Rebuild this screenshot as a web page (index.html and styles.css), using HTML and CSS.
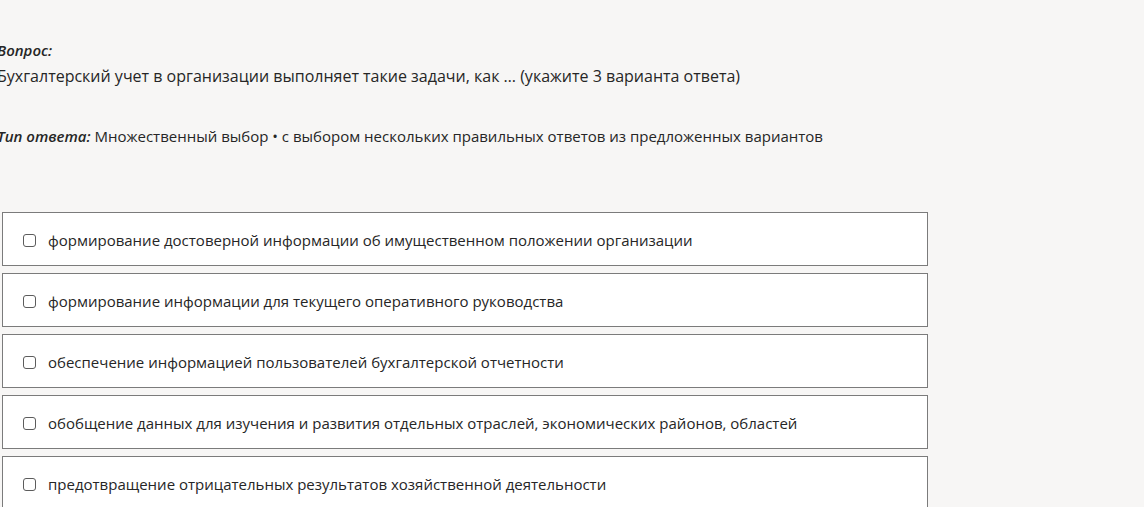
FILE: index.html
```html
<!DOCTYPE html>
<html lang="ru">
<head>
<meta charset="utf-8">
<link rel="stylesheet" href="styles.css">
</head>
<body>
<main class="page">
  <section class="question">
    <div class="label">Вопрос:</div>
    <div class="text">Бухгалтерский учет в организации выполняет такие задачи, как … (укажите 3 варианта ответа)</div>
  </section>
  <div class="type"><span class="label">Тип ответа:</span> Множественный выбор • с выбором нескольких правильных ответов из предложенных вариантов</div>
  <ul class="options">
    <li class="option"><span class="box"></span><span>формирование достоверной информации об имущественном положении организации</span></li>
    <li class="option"><span class="box"></span><span>формирование информации для текущего оперативного руководства</span></li>
    <li class="option"><span class="box"></span><span>обеспечение информацией пользователей бухгалтерской отчетности</span></li>
    <li class="option"><span class="box"></span><span>обобщение данных для изучения и развития отдельных отраслей, экономических районов, областей</span></li>
    <li class="option"><span class="box"></span><span>предотвращение отрицательных результатов хозяйственной деятельности</span></li>
  </ul>
</main>
</body>
</html>
```
FILE: styles.css
```css
html, body {
  margin: 0;
  padding: 0;
  background: #f7f6f5;
  font-family: "Open Sans", "Noto Sans", sans-serif;
  color: #262626;
  overflow: hidden;
}
.page {
  padding: 40px 0 0 2px;
  width: 926px;
}
.question {
  margin-left: -5px;
}
.label {
  font-weight: 600;
  font-style: italic;
  font-size: 15px;
}
.question .label {
  line-height: 20px;
}
.text {
  font-size: 16px;
  line-height: 24px;
  margin-top: 4px;
}
.type {
  margin: 38px 0 0 -5px;
  font-size: 15px;
  line-height: 20px;
}
.options {
  list-style: none;
  margin: 66px 0 0;
  padding: 0;
  display: flex;
  flex-direction: column;
  gap: 7px;
}
.option {
  display: flex;
  align-items: center;
  height: 50px;
  box-sizing: content-box;
  background: #fff;
  border: 1px solid #7b7b7b;
  padding: 2px 0 0 20px;
  font-size: 15px;
}
.box {
  width: 11px;
  height: 11px;
  border: 1px solid #5c5c5c;
  border-radius: 3px;
  margin-right: 12px;
  flex: none;
}
```
